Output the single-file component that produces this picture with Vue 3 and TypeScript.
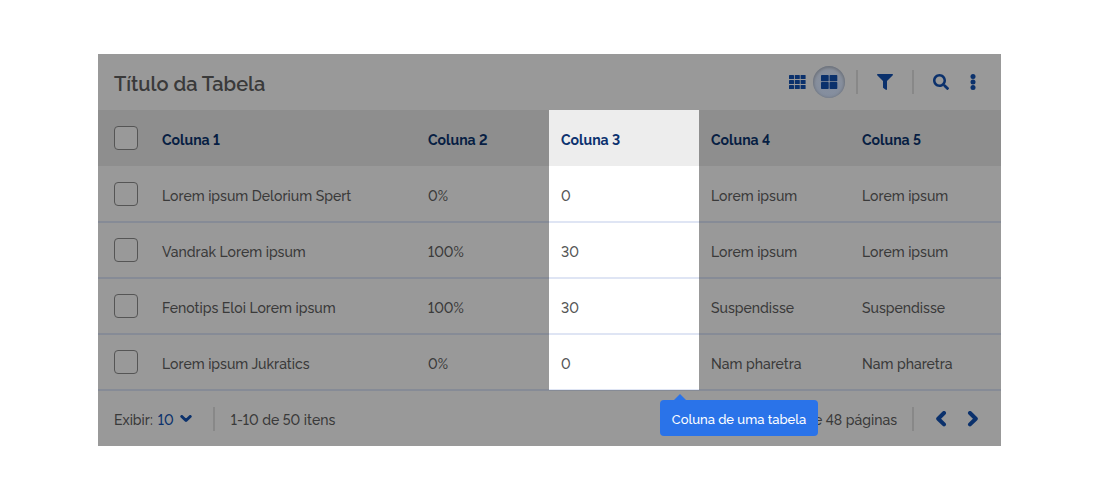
<script setup lang="ts">
import { ref } from 'vue'

interface Row {
  cells: string[]
  checked: boolean
}

const HIGHLIGHTED = 2
const columns = ['Coluna 1', 'Coluna 2', 'Coluna 3', 'Coluna 4', 'Coluna 5']
const rows = ref<Row[]>([
  { cells: ['Lorem ipsum Delorium Spert', '0%', '0', 'Lorem ipsum', 'Lorem ipsum'], checked: false },
  { cells: ['Vandrak Lorem ipsum', '100%', '30', 'Lorem ipsum', 'Lorem ipsum'], checked: false },
  { cells: ['Fenotips Eloi Lorem ipsum', '100%', '30', 'Suspendisse', 'Suspendisse'], checked: false },
  { cells: ['Lorem ipsum Jukratics', '0%', '0', 'Nam pharetra', 'Nam pharetra'], checked: false },
])
const pageSize = ref('10')
const density = ref<'small' | 'large'>('large')

function toggleAll(event: Event) {
  const on = (event.target as HTMLInputElement).checked
  rows.value.forEach((row) => (row.checked = on))
}
</script>

<template>
  <main class="page">
    <section class="card">
      <header class="bar top">
        <h1>Título da Tabela</h1>
        <div class="actions">
          <button class="icon" :class="{ active: density === 'small' }" aria-label="Grade pequena" @click="density = 'small'">
            <svg width="18" height="16" viewBox="0 0 18 16">
              <template v-for="y in 3" :key="y">
                <rect v-for="x in 3" :key="x" :x="(x - 1) * 5.8 + 1" :y="(y - 1) * 5 + 1" width="5" height="4" rx="0.6" />
              </template>
            </svg>
          </button>
          <button class="icon" :class="{ active: density === 'large' }" aria-label="Grade grande" @click="density = 'large'">
            <svg width="18" height="16" viewBox="0 0 18 16">
              <rect x="1" y="1" width="7.700" height="6.200" rx="0.7" />
              <rect x="9.600" y="1" width="7.700" height="6.200" rx="0.7" />
              <rect x="1" y="8" width="7.700" height="7" rx="0.7" />
              <rect x="9.600" y="8" width="7.700" height="7" rx="0.7" />
            </svg>
          </button>
          <span class="divider"></span>
          <button class="icon" aria-label="Filtrar">
            <svg width="16" height="16" viewBox="0 0 512 512">
              <path d="M487.976 0H24.028C2.71 0-8.047 25.866 7.058 40.971L192 225.941V432c0 7.831 3.821 15.17 10.237 19.662l80 55.98C298.02 518.69 320 507.493 320 487.98V225.941l184.947-184.97C520.021 25.896 509.338 0 487.976 0z" />
            </svg>
          </button>
          <span class="divider"></span>
          <button class="icon" aria-label="Buscar">
            <svg width="16" height="16" viewBox="0 0 512 512">
              <path d="M505 442.700L405.300 343c-4.500-4.500-10.600-7-17-7H372c27.600-35.300 44-79.700 44-128C416 93.100 322.900 0 208 0S0 93.100 0 208s93.100 208 208 208c48.300 0 92.700-16.400 128-44v16.300c0 6.400 2.500 12.500 7 17l99.700 99.700c9.400 9.400 24.600 9.400 33.900 0l28.300-28.300c9.400-9.400 9.400-24.600.1-34zM208 336c-70.700 0-128-57.200-128-128 0-70.700 57.200-128 128-128 70.700 0 128 57.200 128 128 0 70.700-57.200 128-128 128z" />
            </svg>
          </button>
          <button class="icon" aria-label="Mais opções">
            <svg width="16" height="16" viewBox="0 0 16 16">
              <circle cx="8" cy="2.500" r="2.500" />
              <circle cx="8" cy="8" r="2.500" />
              <circle cx="8" cy="13.500" r="2.500" />
            </svg>
          </button>
        </div>
      </header>

      <table>
        <colgroup>
          <col class="w-check" />
          <col class="w-1" />
          <col class="w-2" />
          <col class="w-3" />
          <col />
          <col />
        </colgroup>
        <thead>
          <tr>
            <th class="check"><input type="checkbox" aria-label="Selecionar todas as linhas" @change="toggleAll" /></th>
            <th v-for="(name, i) in columns" :key="name" scope="col" :class="{ lit: i === HIGHLIGHTED }">{{ name }}</th>
          </tr>
        </thead>
        <tbody>
          <tr v-for="(row, r) in rows" :key="r">
            <td class="check"><input v-model="row.checked" type="checkbox" :aria-label="'Selecionar ' + row.cells[0]" /></td>
            <td v-for="(cell, i) in row.cells" :key="i" :class="{ lit: i === HIGHLIGHTED }">
              {{ cell }}
              <div v-if="i === HIGHLIGHTED && r === rows.length - 1" class="tooltip" role="tooltip">Coluna de uma tabela</div>
            </td>
          </tr>
        </tbody>
      </table>

      <footer class="bar bottom">
        <label for="page-size">Exibir:</label>
        <span class="select">
          <select id="page-size" v-model="pageSize">
            <option>10</option>
            <option>20</option>
            <option>30</option>
          </select>
          <svg width="12" height="8" viewBox="0 0 12 8"><path class="stroke" d="M1.800 1.500L6 5.500l4.200-4" /></svg>
        </span>
        <span class="divider"></span>
        <span class="count">1-10 de 50 itens</span>
        <span class="pages">1 de 48 páginas</span>
        <span class="divider"></span>
        <button class="icon" aria-label="Página anterior">
          <svg width="12" height="16" viewBox="0 0 12 16"><path class="stroke thick" d="M9 2L3.200 7.700 9 13.400" /></svg>
        </button>
        <button class="icon" aria-label="Próxima página">
          <svg width="12" height="16" viewBox="0 0 12 16"><path class="stroke thick" d="M3 2l5.800 5.700L3 13.400" /></svg>
        </button>
      </footer>
    </section>
  </main>
</template>

<style>
body {
  margin: 0;
  background: #fff;
}
</style>

<style scoped>
.page {
  padding: 54px 99px 54px 98px;
  font: 500 14px/20px Raleway, Lato, sans-serif;
  font-variant-numeric: lining-nums;
  color: #3a3a3a;
}
.card {
  background: #999;
}
.bar {
  display: flex;
  align-items: center;
  height: 56px;
  padding: 0 12px 0 16px;
  box-sizing: border-box;
}
h1 {
  margin: 0;
  padding-top: 4px;
  font-size: 20px;
  line-height: 28px;
  font-weight: 600;
}
.actions {
  display: flex;
  align-items: center;
  margin-left: auto;
}
.icon {
  display: flex;
  align-items: center;
  justify-content: center;
  width: 32px;
  height: 32px;
  padding: 0;
  border: 0;
  border-radius: 50%;
  background: none;
}
.icon.active {
  background: linear-gradient(#8b919c, #848e9f);
  box-shadow: inset 0 1px 3px 1px #6c717a;
}
svg {
  fill: #0b316c;
}
.stroke {
  fill: none;
  stroke: #0b316c;
  stroke-width: 3;
  stroke-linecap: round;
  stroke-linejoin: round;
}
.stroke.thick {
  stroke-width: 4;
}
.divider {
  width: 2px;
  height: 24px;
  margin: 0 11px;
  background: #888;
}
table {
  width: 100%;
  table-layout: fixed;
  border-collapse: separate;
  border-spacing: 0;
}
.w-check {
  width: 52px;
}
.w-1 {
  width: 266px;
}
.w-2 {
  width: 133px;
}
.w-3 {
  width: 150px;
}
th,
td {
  position: relative;
  height: 56px;
  box-sizing: border-box;
  padding: 4px 12px 0;
  text-align: left;
}
th {
  background: #8e8e8e;
  color: #071e43;
  font-weight: 700;
}
td {
  border-bottom: 1px solid #868b96;
}
tr + tr td {
  border-top: 1px solid #868b96;
}
th.lit {
  background: #ededed;
  color: #0c326f;
}
td.lit {
  background: #fff;
  color: #555;
  border-color: #dfe5f4;
}
tr + tr td.lit {
  border-color: #dfe5f4;
}
.check {
  padding: 0 0 0 16px;
}
input {
  display: block;
  appearance: none;
  width: 24px;
  height: 24px;
  margin: 0;
  border: 1px solid #555;
  border-radius: 4px;
  background: #999;
}
input:checked {
  background: #0b316c;
}
.tooltip {
  position: absolute;
  z-index: 1;
  top: 65px;
  left: 111px;
  width: 158px;
  height: 36px;
  box-sizing: border-box;
  padding-top: 2px;
  border-radius: 4px;
  background: #2a73e9;
  color: #fff;
  font-size: 13px;
  line-height: 36px;
  font-weight: 500;
  text-align: center;
  white-space: nowrap;
}
.tooltip::before {
  content: '';
  position: absolute;
  top: -6px;
  left: 14px;
  border: 6px solid transparent;
  border-top: 0;
  border-bottom-color: #2a73e9;
}
.bottom {
  border-top: 1px solid #868b96;
}
.bottom label,
.count,
.pages {
  padding-top: 2px;
}
.select {
  display: flex;
  align-items: center;
  margin: 0 10px 0 5px;
}
select {
  appearance: none;
  width: 22px;
  margin: 0;
  padding: 2px 0 0;
  border: 0;
  background: none;
  color: #0b316c;
  font: inherit;
  font-variant-numeric: lining-nums;
}
.bottom .count {
  margin-left: 5px;
}
.pages {
  margin: 0 4px 0 auto;
}
</style>
